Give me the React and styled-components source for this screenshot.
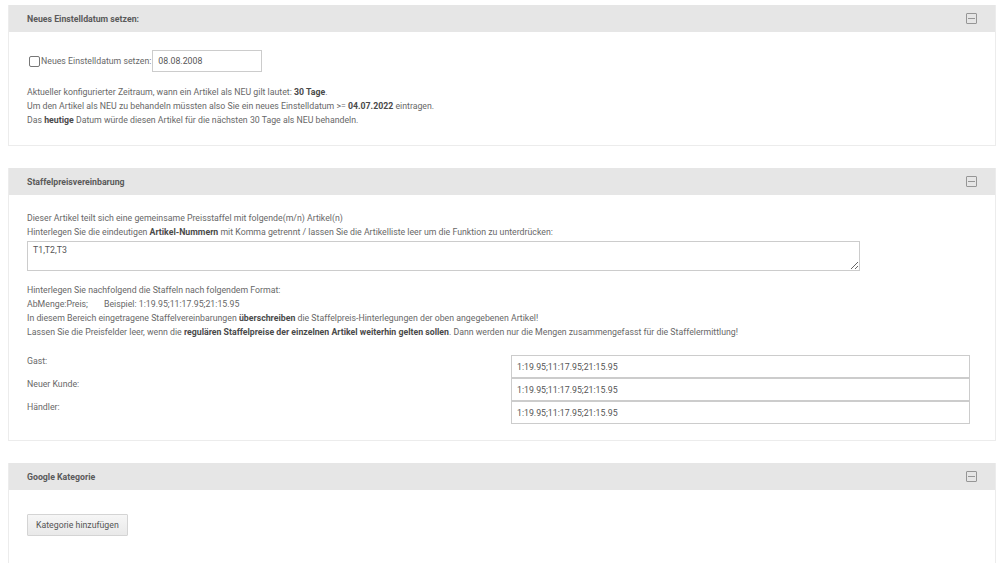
import React from "react";
import styled, { createGlobalStyle } from "styled-components";

const GlobalStyle = createGlobalStyle`
  html, body {
    margin: 0;
    padding: 0;
    background: #fff;
  }
  body {
    font-family: Roboto, "Liberation Sans", Arial, sans-serif;
    font-size: 8.75px;
    color: #686868;
  }
`;

const Page = styled.div`
  padding: 5px 4px 0 8px;
  display: flex;
  flex-direction: column;
  gap: 22px;
`;

const Panel = styled.section`
  border: 1px solid #ececec;
  border-top: none;
  background: #fff;
`;

const Header = styled.div`
  height: 27px;
  background: #e6e6e6;
  display: flex;
  align-items: center;
  justify-content: space-between;
  padding: 0 18px 0 18px;
  box-sizing: border-box;
`;

const Title = styled.h3`
  margin: 0;
  font-size: 8.75px;
  font-weight: 700;
  color: #5a5a5a;
`;

const CollapseIcon = styled.span`
  width: 9px;
  height: 9px;
  border: 1px solid #969696;
  border-radius: 1px;
  position: relative;
  display: inline-block;

  &::after {
    content: "";
    position: absolute;
    left: 1px;
    right: 1px;
    top: 4px;
    height: 1px;
    background: #969696;
  }
`;

const Body = styled.div`
  padding: ${(p) => p.$pad || "16px 18px 16px"};
`;

const DateRow = styled.div`
  display: flex;
  align-items: center;
  gap: 1px;
  padding-left: 2px;
`;

const CheckLabel = styled.label`
  display: flex;
  align-items: center;
  gap: 1px;
  color: #686868;
`;

const Check = styled.span`
  width: 9px;
  height: 9px;
  border: 1px solid #777;
  border-radius: 2px;
  display: inline-block;
`;

const TextInput = styled.input`
  box-sizing: border-box;
  height: ${(p) => p.$h || "22px"};
  width: ${(p) => p.$w || "100%"};
  border: 1px solid #ccc;
  padding: 0 5px;
  font-family: inherit;
  font-size: 8.75px;
  color: #555;
  background: #fff;
  outline: none;
`;

const Info = styled.div`
  margin-top: ${(p) => p.$mt || "0"};
  line-height: 14px;
  color: #686868;

  b {
    color: #4a4a4a;
    font-weight: 700;
  }
`;

const Area = styled.textarea`
  display: block;
  box-sizing: border-box;
  margin-top: 2px;
  width: 833px;
  height: 30px;
  border: 1px solid #ccc;
  padding: 3px 5px;
  font-family: inherit;
  font-size: 8.75px;
  color: #555;
  resize: both;
  outline: none;
`;

const Spacer = styled.span`
  display: inline-block;
  width: 16px;
`;

const PriceGrid = styled.div`
  margin-top: 16px;
  display: grid;
  grid-template-columns: 484px 459px;
`;

const PriceLabel = styled.div`
  height: 23px;
  padding-top: 1px;
  box-sizing: border-box;
  color: #686868;
`;

const Button = styled.button`
  height: 22px;
  padding: 0 8px;
  border: 1px solid #d4d4d4;
  border-radius: 1px;
  background: linear-gradient(#f6f6f6, #e9e9e9);
  font-family: inherit;
  font-size: 8.75px;
  color: #555;
`;

const prices = ["Gast:", "Neuer Kunde:", "Händler:"];

const App = () => {
  return (
    <>
      <GlobalStyle />
      <Page>
        <Panel>
          <Header>
            <Title>Neues Einstelldatum setzen:</Title>
            <CollapseIcon />
          </Header>
          <Body $pad="18px 18px 18px">
            <DateRow>
              <CheckLabel>
                <Check />
                Neues Einstelldatum setzen:
              </CheckLabel>
              <TextInput $w="110px" defaultValue="08.08.2008" />
            </DateRow>
            <Info $mt="13px">
              Aktueller konfigurierter Zeitraum, wann ein Artikel als NEU gilt lautet: <b>30 Tage</b>.
              <br />
              Um den Artikel als NEU zu behandeln müssten also Sie ein neues Einstelldatum &gt;={" "}
              <b>04.07.2022</b> eintragen.
              <br />
              Das <b>heutige</b> Datum würde diesen Artikel für die nächsten 30 Tage als NEU behandeln.
            </Info>
          </Body>
        </Panel>

        <Panel>
          <Header>
            <Title>Staffelpreisvereinbarung</Title>
            <CollapseIcon />
          </Header>
          <Body $pad="16px 18px 16px">
            <Info>
              Dieser Artikel teilt sich eine gemeinsame Preisstaffel mit folgende(m/n) Artikel(n)
              <br />
              Hinterlegen Sie die eindeutigen <b>Artikel-Nummern</b> mit Komma getrennt / lassen Sie die
              Artikelliste leer um die Funktion zu unterdrücken:
            </Info>
            <Area defaultValue="T1,T2,T3" />
            <Info $mt="12px">
              Hinterlegen Sie nachfolgend die Staffeln nach folgendem Format:
              <br />
              AbMenge:Preis;<Spacer />Beispiel: 1:19.95;11:17.95;21:15.95
              <br />
              In diesem Bereich eingetragene Staffelvereinbarungen <b>überschreiben</b> die
              Staffelpreis-Hinterlegungen der oben angegebenen Artikel!
              <br />
              Lassen Sie die Preisfelder leer, wenn die{" "}
              <b>regulären Staffelpreise der einzelnen Artikel weiterhin gelten sollen</b>. Dann werden nur
              die Mengen zusammengefasst für die Staffelermittlung!
            </Info>
            <PriceGrid>
              {prices.map((label) => (
                <React.Fragment key={label}>
                  <PriceLabel>{label}</PriceLabel>
                  <TextInput $h="23px" defaultValue="1:19.95;11:17.95;21:15.95" />
                </React.Fragment>
              ))}
            </PriceGrid>
          </Body>
        </Panel>

        <Panel>
          <Header>
            <Title>Google Kategorie</Title>
            <CollapseIcon />
          </Header>
          <Body $pad="24px 18px 30px">
            <Button>Kategorie hinzufügen</Button>
          </Body>
        </Panel>
      </Page>
    </>
  );
};

export default App;
